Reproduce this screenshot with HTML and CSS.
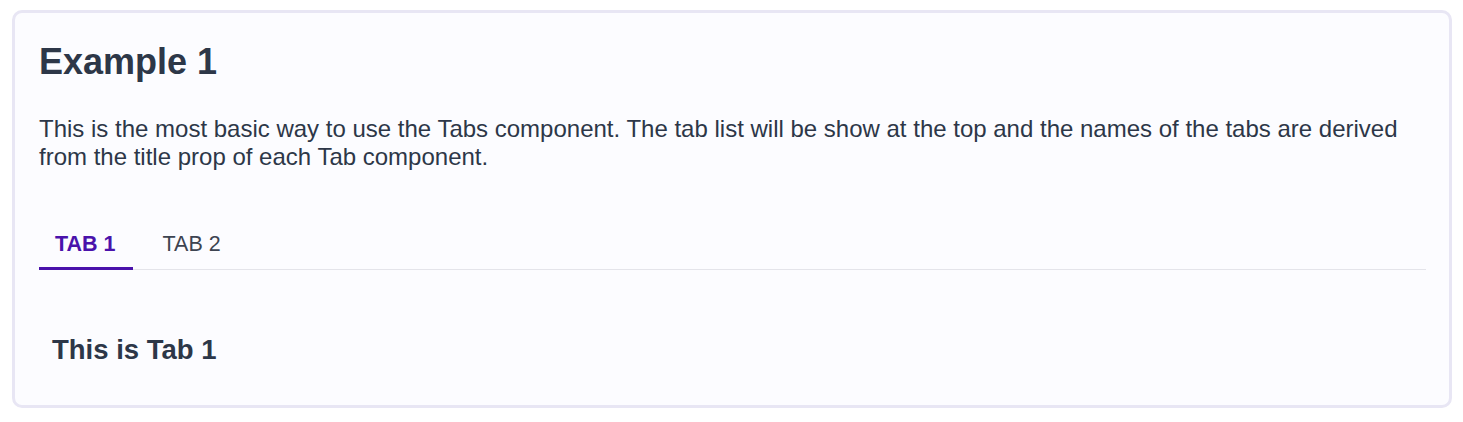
FILE: index.html
```html
<!DOCTYPE html>
<html>
	<head>
		<meta charset="UTF-8">
		<title>Tabs</title>
		<link rel="stylesheet" href="styles.css">
	</head>
	<body>
		<div class="card">
			<h1 class="title">Example 1</h1>
			<p class="desc">This is the most basic way to use the Tabs component. The tab list will be show at the top and the names of the tabs are derived from the title prop of each Tab component.</p>
			<div class="tabs">
				<div class="tab-list">
					<div class="tab active">TAB 1</div>
					<div class="tab">TAB 2</div>
				</div>
				<div class="tab-panel">
					<h2>This is Tab 1</h2>
				</div>
			</div>
		</div>
	</body>
</html>
```

FILE: styles.css
```css
*{
	padding: 0;
	margin: 0;
	box-sizing: border-box;
}
body{
	font-family: "Liberation Sans", Arial, sans-serif;
	color: #2d3748;
	background: #fff;
	padding: 10px 11px 0 12px;
}
.card{
	background-color: #fcfcff;
	border: 3px solid #e8e6f4;
	border-radius: 10px;
	padding: 29px 23px 0 24px;
	height: 398px;
}
.title{
	font-size: 36px;
	line-height: 40px;
	font-weight: bold;
	margin-bottom: 33px;
}
.desc{
	font-size: 24px;
	line-height: 28px;
	margin-bottom: 49px;
}
.tab-list{
	display: flex;
	gap: 14px;
	border-bottom: 1px solid #e4e4ea;
}
.tab{
	font-size: 21.5px;
	line-height: 24px;
	padding: 12px 17px 11px 16px;
	color: #3d4451;
	margin-bottom: -1px;
	border-bottom: 3px solid transparent;
}
.tab.active{
	color: #4a12ab;
	font-weight: bold;
	border-bottom-color: #4a12ab;
}
.tab-panel{
	padding: 65px 14px 0 13px;
}
.tab-panel h2{
	font-size: 27.5px;
	line-height: 30px;
	font-weight: bold;
}
```
